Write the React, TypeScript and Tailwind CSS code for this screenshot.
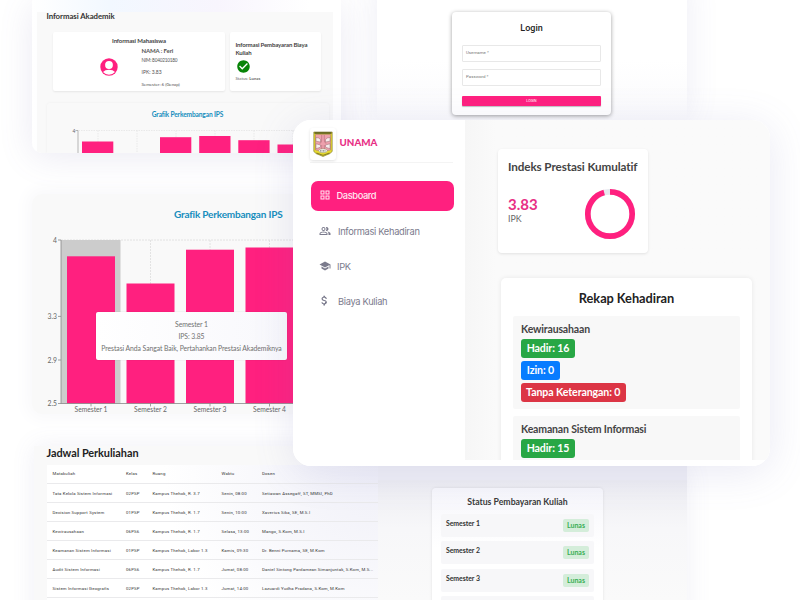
import React from "react";
import { MdOutlineGridView, MdOutlinePeopleAlt, MdSchool, MdAttachMoney, MdCheckCircle } from "react-icons/md";

const PINK = "#ff207f";

function Crest() {
  return (
    <svg viewBox="0 0 20 26" className="h-[26px] w-[20px]">
      <path d="M.8 1h18.400v19.500q-2 2.500-5.700 3.500l-3.500 1.500l-3.500-1.500q-3.700-1-5.700-3.500z" fill="#e6da2e" stroke="#77712b" strokeWidth=".6" />
      <path d="M2.500 3.500h15v15.500q-7.500 2.500-15 0z" fill="#eda1ad" stroke="#93616b" strokeWidth=".4" />
      <path d="M1.500 1.300h17v1.500h-17z" fill="#4e5023" />
      <path d="M3 6.500q3 0 4.500 2v2.500l-4.500-.8zM17 6.500q-3 0-4.500 2v2.500l4.500-.8zM3 12.800l4.500 1.200v2.200l-4.500 1.500zM17 12.800l-4.500 1.200v2.200l4.500 1.500z" fill="#f8eded" stroke="#9b6870" strokeWidth=".5" />
      <path d="M8.700 4v5q0 3-2 3.500M11.300 4v5q0 3 2 3.500M8.700 18v-4M11.300 18v-4" stroke="#a9626f" strokeWidth=".5" fill="none" />
      <ellipse cx="10" cy="19.700" rx="4.300" ry="2" fill="#f6f6f1" stroke="#77743c" strokeWidth=".4" />
      <path d="M7 19.900h6" stroke="#444" strokeWidth=".8" strokeDasharray="1 .5" />
      <path d="M3.500 22l6.500 2.300l6.500-2.300" stroke="#5e5a20" strokeWidth=".7" fill="none" />
    </svg>
  );
}

function AcademicWindow() {
  const bars = [
    [81.5, 141.5],
    [159.5, 137.2],
    [198.7, 136],
    [237.8, 140.2],
    [277, 144.5],
  ];
  return (
    <section className="absolute left-[32px] top-0 h-[153px] w-[309px] overflow-hidden rounded-bl-[10px] bg-white bg-[linear-gradient(90deg,#ffffff_0%,#f2f8ff_25%,#f8f5fd_60%,#ffffff_90%)] pl-[5px] pr-[8px] pt-[12px]">
      <div className="h-[141px] bg-[#f9f9f9] pl-[9.500px] pr-[5px]">
        <h2 className="h-[20px] text-[7.800px] font-bold leading-[9px] tracking-[-0.050px] text-[#333]">Informasi Akademik</h2>
        <div className="flex gap-[5px] pl-[6.500px]">
          <div className="flex h-[59px] w-[172px] flex-col rounded-[2px] bg-white pt-[5px] shadow-[0_1px_2px_rgba(0,0,0,0.08)]">
            <h3 className="text-center text-[6px] font-bold leading-[8px] tracking-[-0.120px] text-[#444]">Informasi Mahasiswa</h3>
            <div className="flex">
              <svg viewBox="0 0 18 18" className="ml-[46.500px] mt-[13px] h-[18px] w-[18px]">
                <circle cx="9" cy="9" r="8.700" fill={PINK} />
                <circle cx="9" cy="7" r="3.900" fill="#fff" />
                <path d="M3 14q2-2.200 6-2.200t6 2.200q-2.500 2.700-6 2.700t-6-2.700z" fill="#fff" />
              </svg>
              <div className="ml-[24px] text-[#555]">
                <p className="h-[12px] text-[6px] font-bold leading-[11px] tracking-[-0.120px]">NAMA : Feri</p>
                <p className="h-[7px] text-[4.700px] leading-[7px] tracking-[-0.200px]">NIM: 8040210180</p>
                <p className="mt-[5px] h-[7px] text-[5px] leading-[7px]">IPK: 3.83</p>
                <p className="mt-[4.500px] h-[7px] text-[4.500px] leading-[7px] tracking-[-0.070px]">Semester: 6 (Genap)</p>
              </div>
            </div>
          </div>
          <div className="h-[59px] w-[91px] rounded-[2px] bg-white px-[5.500px] pt-[9px] shadow-[0_1px_2px_rgba(0,0,0,0.08)]">
            <h3 className="whitespace-nowrap text-[6px] font-bold leading-[7.500px] tracking-[-0.140px] text-[#444]">Informasi Pembayaran Biaya<br />Kuliah</h3>
            <MdCheckCircle className="mt-[3px] h-[15px] w-[15px] text-[#078407]" />
            <p className="mt-[1.500px] text-[4.300px] leading-[6px] text-[#666]">Status: <b>Lunas</b></p>
          </div>
        </div>
        <div className="mt-[12px] h-[50px] w-[282px] rounded-t-[3px] shadow-[0_0_3px_rgba(0,0,0,0.05)]">
          <h3 className="h-[23px] text-center text-[6.600px] font-bold leading-[22px] tracking-[-0.130px] text-[#168dbd]">Grafik Perkembangan IPS</h3>
          <svg viewBox="46.5 126 282 27" className="block h-[27px] w-[282px]">
            <path d="M78 130.500h250M97.500 130.500v22M136.500 130.500v22M175.500 130.500v22M214.500 130.500v22M253.500 130.500v22M292.500 130.500v22" stroke="#ddd" strokeWidth=".6" strokeDasharray="1.500 1" />
            <path d="M75 130.500h2.500V153" fill="none" stroke="#999" strokeWidth=".7" />
            <text x="72" y="132.500" fontSize="5" fill="#666">4</text>
            {bars.map(([x, y]) => <rect key={x} x={x} y={y} width="31.3" height={153 - y} fill={PINK} />)}
          </svg>
        </div>
      </div>
    </section>
  );
}

function Field({ label }: { label: string }) {
  return <div className="flex h-[17px] items-center rounded-[1px] border border-[#e8e8e8] px-[3px] text-[4.400px] text-[#777]">{label}</div>;
}

function LoginWindow() {
  return (
    <section className="absolute left-[377px] top-0 h-[120px] w-[310px] bg-gradient-to-b from-white via-white to-[#fafafc] pl-[75px] pt-[12px] font-[Roboto,sans-serif]">
      <form className="flex h-[103px] w-[159px] flex-col rounded-[4px] bg-white px-[10px] shadow-[0_1px_4px_rgba(0,0,0,0.38)]">
        <h2 className="h-[33px] text-center text-[9px] font-medium leading-[32px] text-[#222]">Login</h2>
        <Field label="Username *" />
        <div className="h-[7px]" />
        <Field label="Password *" />
        <button className="mt-[9.500px] h-[10.500px] rounded-[1px] bg-[#ff207f] text-[3.600px] leading-[10px] text-white shadow-[0_1px_1px_rgba(0,0,0,0.25)]">LOGIN</button>
      </form>
    </section>
  );
}

function ChartWindow() {
  const bars = [256.3, 283.5, 249.7, 247.5];
  const ticks: [string, number][] = [["4", 240], ["3.3", 316.4], ["2.9", 360], ["2.5", 403.5]];
  return (
    <section className="absolute left-[32px] top-[194px] h-[220px] w-[270px] rounded-[10px] bg-[#f9f9f9] shadow-[0_0_16px_6px_rgba(249,249,251,1)]">
      <h2 className="ml-[142px] h-[46px] whitespace-nowrap text-[10px] font-bold leading-[41px] tracking-[-0.200px] text-[#168dbd]">Grafik Perkembangan IPS</h2>
      <svg viewBox="32 240 270 174" className="block h-[174px] w-[270px] overflow-visible">
        <path d="M61 240h241M150.500 240v164M210 240v164M269.500 240v164" stroke="#ddd" strokeWidth=".8" strokeDasharray="2 1" />
        <rect x="61" y="240" width="59.500" height="163.500" fill="#ccc" />
        {bars.map((y, i) => <rect key={i} x={67 + i * 59.5} y={y} width="48" height={403.5 - y} fill={PINK} />)}
        <path d="M61 240v163.500h241" fill="none" stroke="#888" strokeWidth=".8" />
        {ticks.map(([t, y]) => (
          <g key={t}>
            <path d={`M58 ${y}h3`} stroke="#888" strokeWidth=".8" />
            <text x="57" y={y + 2.5} textAnchor="end" fontSize="6.800" fill="#666">{t}</text>
          </g>
        ))}
        {bars.map((_, i) => (
          <g key={i}>
            <path d={`M${91 + i * 59.5} 403.500v3`} stroke="#888" strokeWidth=".8" />
            <text x={91 + i * 59.5} y="411.500" textAnchor="middle" fontSize="6.700" fill="#666">{`Semester ${i + 1}`}</text>
          </g>
        ))}
      </svg>
      <div className="absolute left-[64px] top-[117.500px] flex h-[48px] w-[191px] flex-col justify-center rounded-[2px] bg-gradient-to-r from-white to-[#f8f8fc] text-center text-[6.800px] leading-[12px] tracking-[-0.060px] text-[#707070] shadow-[0_0_1px_rgba(0,0,0,0.3)]">
        <p>Semester 1</p>
        <p>IPS: 3.85</p>
        <p className="whitespace-nowrap">Prestasi Anda Sangat Baik, Pertahankan Prestasi Akademiknya</p>
      </div>
    </section>
  );
}

const schedule = [
  ["Matakuliah", "Kelas", "Ruang", "Waktu", "Dosen"],
  ["Tata Kelola Sistem Informasi", "02PSP", "Kampus Thehok, R. 3.7", "Senin, 08:00", "Setiawan Assegaff, ST, MMSI, PhD"],
  ["Decision Support System", "01PSP", "Kampus Thehok, R. 1.7", "Senin, 10:00", "Xaverius Sika, SE, M.S.I"],
  ["Kewirausahaan", "06PS6", "Kampus Thehok, R. 1.7", "Selasa, 13:00", "Mango, S.Kom, M.S.I"],
  ["Keamanan Sistem Informasi", "01PSP", "Kampus Thehok, Labor 1.3", "Kamis, 09:30", "Dr. Benni Purnama, SE, M.Kom"],
  ["Audit Sistem Informasi", "06PS6", "Kampus Thehok, R. 1.7", "Jumat, 08:00", "Daniel Sintong Pardamean Simanjuntak, S.Kom, M.S..."],
  ["Sistem Informasi Geografis", "02PSP", "Kampus Thehok, Labor 1.3", "Jumat, 14:00", "Lazuardi Yudha Pradana, S.Kom, M.Kom"],
];

function ScheduleWindow() {
  return (
    <section className="absolute left-[34px] top-[446px] h-[154px] w-[344px] overflow-hidden bg-[#f9f9f9] pl-[12.500px]">
      <h2 className="h-[19px] text-[10.900px] font-bold leading-[13px] tracking-[-0.050px] text-[#222]">Jadwal Perkuliahan</h2>
      <div className="h-[135px] bg-white bg-[radial-gradient(circle_at_100%_0%,#f0f0f8_0%,#ffffff_60%)] font-[Roboto,sans-serif] text-[4.300px] tracking-[0.170px] text-[#333]">
        {schedule.map((row) => (
          <div key={row[0]} className="grid h-[18.900px] grid-cols-[73.500px_26.500px_69px_40.500px_1fr] items-center whitespace-nowrap border-b border-[#eaeaec] pl-[6px] pt-[2px] first:h-[19.400px] first:pt-[1px]">
            {row.map((cell, i) => <span key={i}>{cell}</span>)}
          </div>
        ))}
      </div>
    </section>
  );
}

function PaymentWindow() {
  return (
    <section className="absolute left-[377px] top-[466px] h-[134px] w-[310px] overflow-hidden bg-[#efeff6] pt-[14px]">
      <div className="h-[120px] bg-gradient-to-b from-[#ededf2] via-[#f7f7f9] via-40% to-[#fafafa] pl-[55px] pt-[8px]">
        <div className="h-[120px] w-[171px] rounded-[4px] bg-gradient-to-b from-[#f6f6fb] to-white to-50% px-[9px] shadow-[0_0_3px_rgba(0,0,0,0.1)]">
          <h2 className="h-[26px] text-center text-[8.700px] font-bold leading-[28px] text-[#3a3a3a]">Status Pembayaran Kuliah</h2>
          <div className="flex flex-col gap-[4.400px]">
            {[1, 2, 3].map((n) => (
              <div key={n} className="flex h-[23px] justify-between rounded-[2px] bg-[#f7f7f9] pl-[5px] pr-[5px] pt-[5px]">
                <span className="text-[6.900px] font-bold leading-[9px] tracking-[-0.040px] text-[#333]">Semester {n}</span>
                <span className="h-[13px] w-[26px] rounded-[2px] bg-[#d4edda] text-center text-[7px] font-bold leading-[13px] text-[#38ad54]">Lunas</span>
              </div>
            ))}
            <div className="h-[23px] rounded-[2px] bg-[#f7f7f9]" />
          </div>
        </div>
      </div>
    </section>
  );
}

function Badge({ children, className }: { children: React.ReactNode; className: string }) {
  return <span className={`flex h-[19px] items-center justify-center whitespace-nowrap rounded-[3px] text-[10.600px] font-bold tracking-[-0.100px] text-white ${className}`}>{children}</span>;
}

function Sidebar() {
  const item = "flex h-[35px] items-center text-[9.300px] tracking-[-0.320px] text-[#7b7b8d]";
  return (
    <aside className="w-[172px] bg-white pl-[17px] pr-[12px] pt-[8px] font-[Inter,sans-serif]">
      <div className="flex h-[35px] border-b border-[#f4f4f4]">
        <div className="flex h-[32px] w-[26px] items-center justify-center rounded-[3px] bg-white shadow-[0_1px_3px_rgba(0,0,0,0.12)]"><Crest /></div>
        <span className="ml-[3.500px] font-[Lato,sans-serif] text-[9.800px] font-black leading-[28px] text-[#e82f85]">UNAMA</span>
      </div>
      <div className="ml-[0.500px] mt-[17.500px] flex h-[30.500px] w-[143.500px] items-center rounded-[7px] bg-[#ff207f] pl-[8px] text-[9.300px] font-medium tracking-[-0.400px] text-[#ffe9f2]">
        <MdOutlineGridView className="mr-[6px] mt-[-2px] h-[12px] w-[12px]" />Dasboard
      </div>
      <nav className="mt-[3px]">
        <div className={item}><MdOutlinePeopleAlt className="ml-[9px] mr-[7px] mt-[-2px] h-[12px] w-[12px]" />Informasi Kehadiran</div>
        <div className={item}><MdSchool className="ml-[9px] mr-[6px] mt-[-2px] h-[12px] w-[12px]" />IPK</div>
        <div className={item}><MdAttachMoney className="ml-[8px] mr-[7px] mt-[-2px] h-[13px] w-[13px]" />Biaya Kuliah</div>
      </nav>
    </aside>
  );
}

function DashboardWindow() {
  return (
    <main className="absolute left-[293px] top-[120px] flex h-[346px] w-[477px] overflow-hidden rounded-[18px] bg-white">
      <Sidebar />
      <div className="h-[340px] w-[305px] overflow-hidden bg-gradient-to-r from-[#f6f6f6] via-[#fafafa] via-10% to-[#fafafa] pl-[33px] pt-[29px]">
        <section className="h-[104px] w-[150px] rounded-[4px] bg-white px-[10px] shadow-[0_1px_3px_rgba(0,0,0,0.1)]">
          <h2 className="h-[35px] whitespace-nowrap text-[11.700px] font-bold leading-[34px] tracking-[-0.100px] text-[#444]">Indeks Prestasi Kumulatif</h2>
          <div className="flex justify-between pr-[2px]">
            <div className="pt-[11px]">
              <p className="text-[15px] font-bold leading-[18px] text-[#e82f85]">3.83</p>
              <p className="text-[8.800px] leading-[11px] text-[#666]">IPK</p>
            </div>
            <svg viewBox="0 0 52 52" className="mt-[4px] h-[52px] w-[52px]">
              <circle cx="26" cy="26" r="22.200" fill="none" stroke="#e6e8ee" strokeWidth="5.700" />
              <circle cx="26" cy="26" r="22.200" fill="none" stroke={PINK} strokeWidth="5.700" pathLength="100" strokeDasharray="95.7 4.3" transform="rotate(-90 26 26)" />
            </svg>
          </div>
        </section>
        <section className="ml-[3px] mt-[25px] h-[190px] w-[251px] rounded-t-[5px] bg-white px-[12px] shadow-[0_0_5px_rgba(0,0,0,0.08)]">
          <h2 className="h-[38px] text-center text-[12.800px] font-bold leading-[40px] tracking-[-0.050px] text-[#222]">Rekap Kehadiran</h2>
          <div className="flex h-[93px] flex-col items-start gap-[3px] rounded-[2px] bg-[#f8f8f8] pl-[8px] pt-[7px]">
            <h3 className="h-[13px] text-[10.500px] font-bold leading-[13px] tracking-[-0.160px] text-[#444]">Kewirausahaan</h3>
            <Badge className="w-[54px] bg-[#28a745]">Hadir: 16</Badge>
            <Badge className="w-[39px] bg-[#087cff]">Izin: 0</Badge>
            <Badge className="w-[104.500px] bg-[#dc3545]">Tanpa Keterangan: 0</Badge>
          </div>
          <div className="mt-[7px] flex h-[60px] flex-col items-start gap-[3px] rounded-[2px] bg-[#f8f8f8] pl-[8px] pt-[7px]">
            <h3 className="h-[13px] text-[10.500px] font-bold leading-[13px] tracking-[-0.160px] text-[#444]">Keamanan Sistem Informasi</h3>
            <Badge className="w-[54px] bg-[#28a745]">Hadir: 15</Badge>
          </div>
        </section>
      </div>
    </main>
  );
}

export default function App() {
  return (
    <div className="relative h-[600px] w-[800px] overflow-hidden bg-white font-[Lato,sans-serif]">
      <div className="absolute left-[32px] top-0 h-[153px] w-[309px] rounded-[10px] shadow-[0_4px_34px_rgba(110,105,170,0.14)]" />
      <div className="absolute left-[377px] top-[-20px] h-[140px] w-[310px] shadow-[0_0_30px_rgba(110,105,170,0.12)]" />
      <div className="absolute left-[34px] top-[446px] h-[180px] w-[344px] shadow-[0_0_22px_rgba(110,105,170,0.1)]" />
      <div className="absolute left-[377px] top-[466px] h-[160px] w-[310px] shadow-[0_0_24px_rgba(110,105,170,0.1)]" />
      <AcademicWindow />
      <LoginWindow />
      <ChartWindow />
      <PaymentWindow />
      <ScheduleWindow />
      <div className="absolute left-[293px] top-[120px] h-[346px] w-[477px] rounded-[18px] shadow-[0_6px_40px_rgba(110,105,180,0.15)]" />
      <DashboardWindow />
    </div>
  );
}
